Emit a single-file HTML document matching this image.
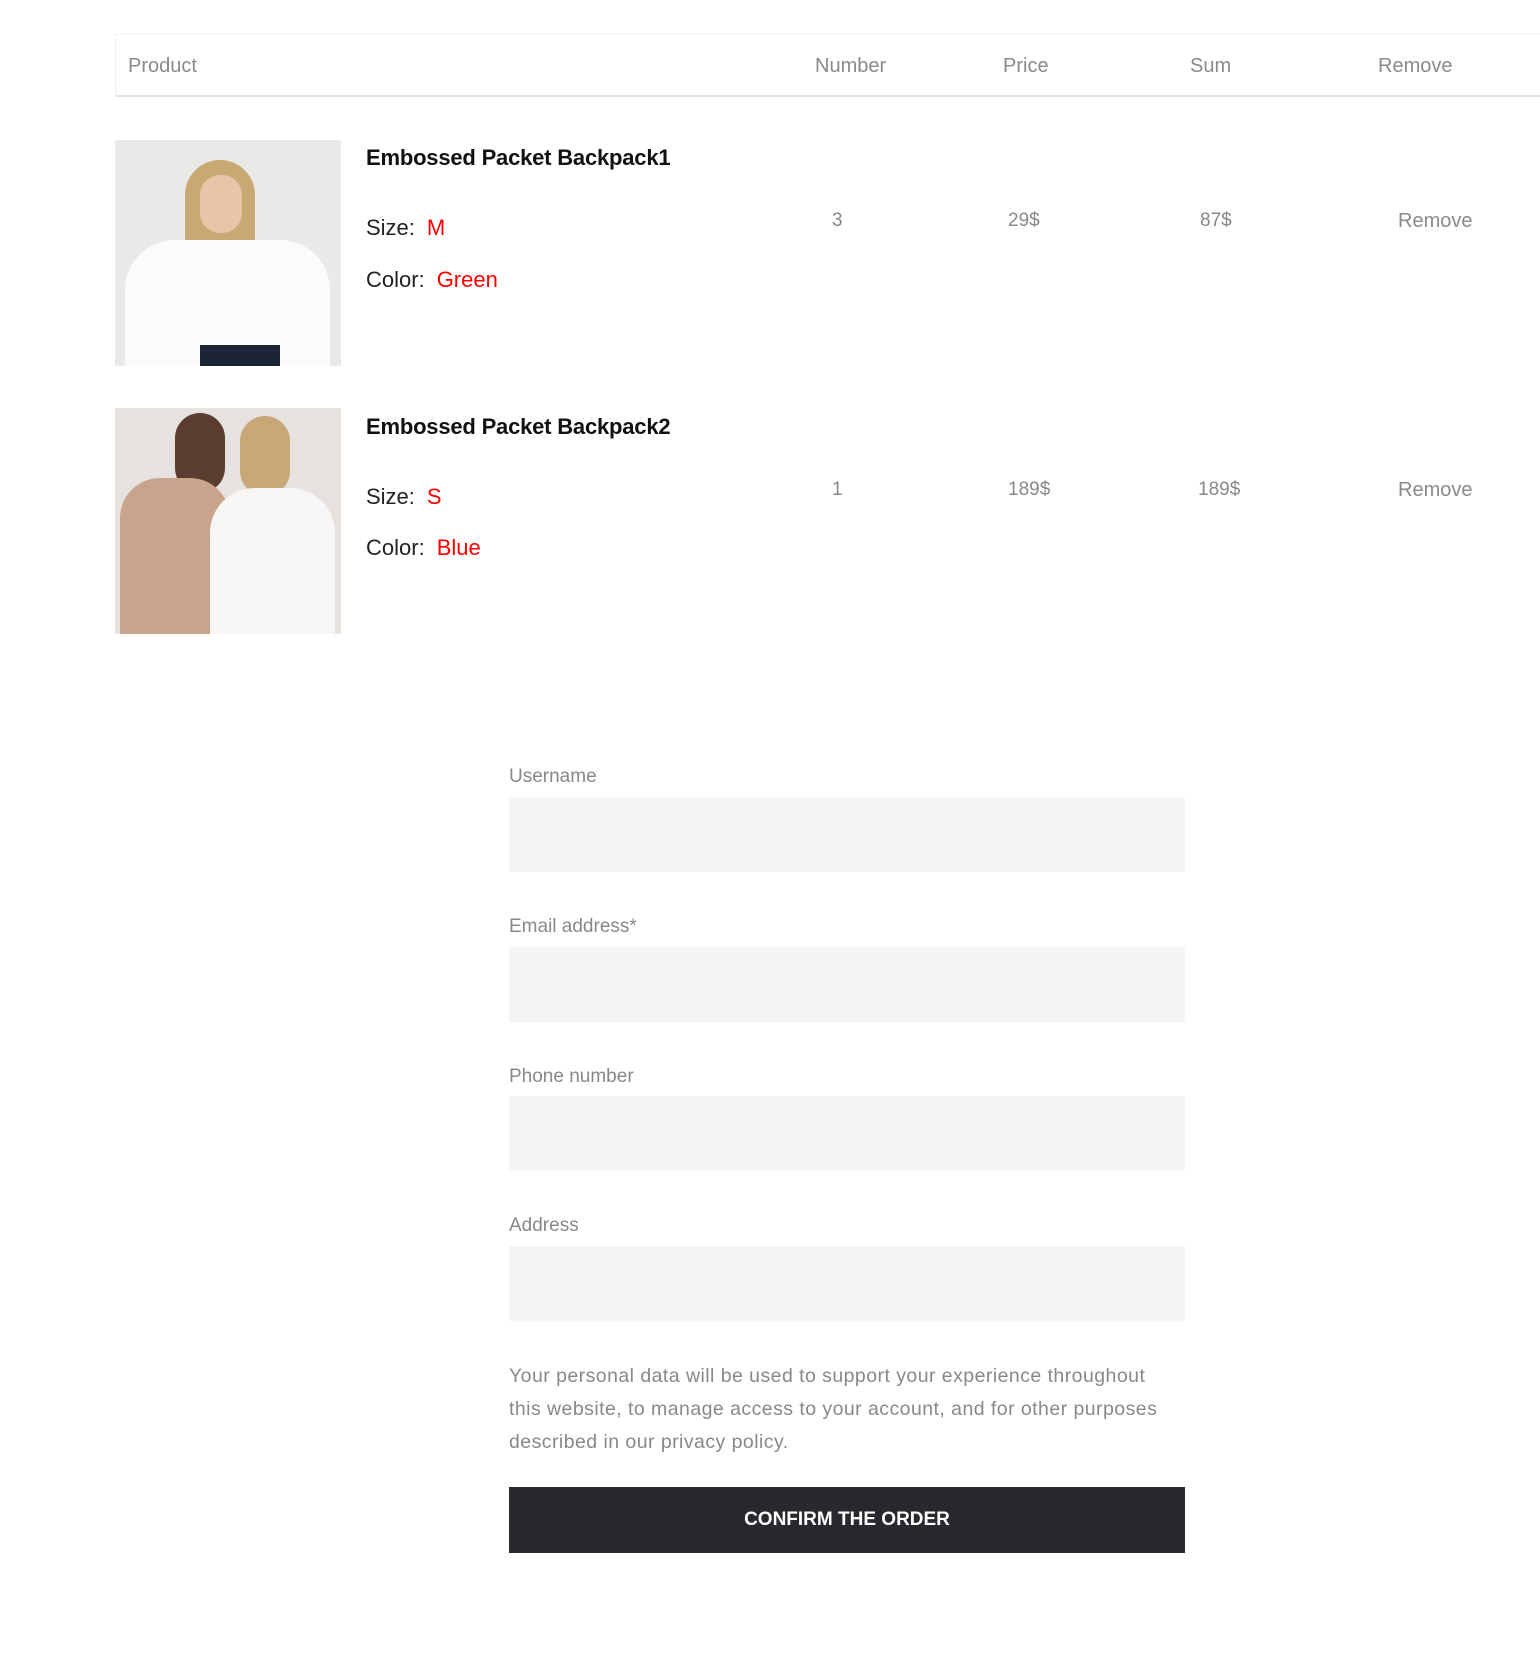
<!DOCTYPE html>
<html><head><meta charset="utf-8"><style>
*{margin:0;padding:0;box-sizing:border-box}
body{width:1540px;height:1660px;background:#fff;font-family:"Liberation Sans",sans-serif;position:relative;overflow:hidden}
.a{position:absolute;white-space:nowrap}
.hd{position:absolute;left:115px;top:34px;width:1425px;height:63px;border:1px solid #f0f0f0;border-bottom:2px solid #e4e4e4;border-right:none}
.h{color:#8a8a8a;font-size:20px;top:55px}
.t{font-size:22px;color:#111;font-weight:bold;left:366px;letter-spacing:-0.2px}
.k{font-size:22px;color:#222;left:366px}
.k span{color:#f00;margin-left:12px}
.v{font-size:19px;color:#888}
.img{position:absolute;left:115px;width:226px;height:226px;overflow:hidden}
.lbl{left:509px;font-size:19px;color:#888}
.in{position:absolute;left:509px;width:676px;height:75px;background:#f5f5f5}
.p{position:absolute;left:509px;top:1360px;white-space:nowrap;font-size:19.5px;line-height:33px;color:#888;letter-spacing:0.45px}
.btn{position:absolute;left:509px;top:1487px;width:676px;height:66px;background:#29292d;color:#fff;font-size:19px;text-align:center;line-height:66px;font-weight:bold}
</style></head><body>
<div class="hd"></div>
<div class="a h" style="left:128px">Product</div>
<div class="a h" style="left:815px">Number</div>
<div class="a h" style="left:1003px">Price</div>
<div class="a h" style="left:1190px">Sum</div>
<div class="a h" style="left:1378px">Remove</div>

<div class="img" style="top:140px;background:#e9e9e7">
<div style="position:absolute;left:70px;top:20px;width:70px;height:110px;border-radius:35px 35px 10px 10px;background:#c9a874"></div>
<div style="position:absolute;left:85px;top:35px;width:42px;height:58px;border-radius:20px;background:#e8c4a8"></div>
<div style="position:absolute;left:10px;top:100px;width:205px;height:126px;border-radius:50px 50px 0 0;background:#fbfbfb"></div>
<div style="position:absolute;left:85px;top:205px;width:80px;height:21px;background:#1c2438"></div>
</div>
<div class="a t" style="top:145px">Embossed Packet Backpack1</div>
<div class="a k" style="top:215px">Size:<span>M</span></div>
<div class="a k" style="top:267px">Color:<span>Green</span></div>
<div class="a v" style="left:832px;top:210px">3</div>
<div class="a v" style="left:1008px;top:210px">29$</div>
<div class="a v" style="left:1200px;top:210px">87$</div>
<div class="a h" style="left:1398px;top:210px">Remove</div>

<div class="img" style="top:408px;background:#e6e2e0">
<div style="position:absolute;left:60px;top:5px;width:50px;height:80px;border-radius:25px;background:#5a3d2e"></div>
<div style="position:absolute;left:125px;top:8px;width:50px;height:80px;border-radius:25px;background:#c8a878"></div>
<div style="position:absolute;left:5px;top:70px;width:110px;height:156px;border-radius:40px 40px 0 0;background:#c9a48c"></div>
<div style="position:absolute;left:95px;top:80px;width:125px;height:146px;border-radius:45px 45px 0 0;background:#f7f6f4"></div>
</div>
<div class="a t" style="top:414px">Embossed Packet Backpack2</div>
<div class="a k" style="top:484px">Size:<span>S</span></div>
<div class="a k" style="top:535px">Color:<span>Blue</span></div>
<div class="a v" style="left:832px;top:479px">1</div>
<div class="a v" style="left:1008px;top:479px">189$</div>
<div class="a v" style="left:1198px;top:479px">189$</div>
<div class="a h" style="left:1398px;top:479px">Remove</div>

<div class="a lbl" style="top:766px">Username</div><div class="in" style="top:797px"></div>
<div class="a lbl" style="top:916px">Email address*</div><div class="in" style="top:947px"></div>
<div class="a lbl" style="top:1066px">Phone number</div><div class="in" style="top:1096px"></div>
<div class="a lbl" style="top:1215px">Address</div><div class="in" style="top:1246px"></div>
<div class="p">Your personal data will be used to support your experience throughout<br>this website, to manage access to your account, and for other purposes<br>described in our privacy policy.</div>
<div class="btn">CONFIRM THE ORDER</div>
</body></html>
